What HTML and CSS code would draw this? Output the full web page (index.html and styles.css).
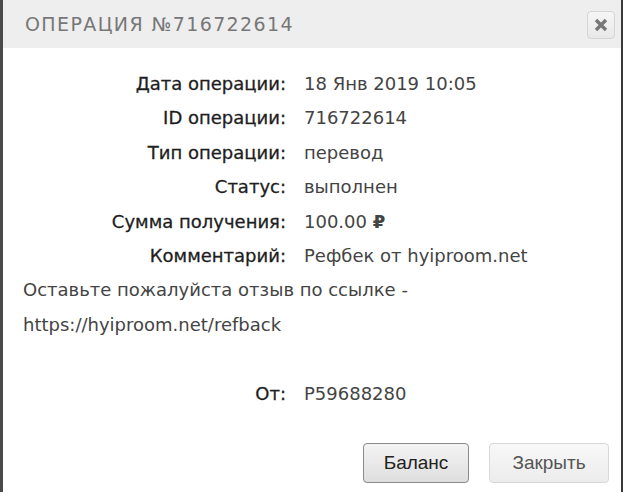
FILE: index.html
```html
<!DOCTYPE html>
<html>
<head>
<meta charset="utf-8">
<link rel="stylesheet" href="styles.css">
</head>
<body>
<div class="dialog">
  <div class="header">
    <div class="title">ОПЕРАЦИЯ №716722614</div>
    <button class="close" aria-label="close">
      <svg width="14" height="14" viewBox="0 0 14 14"><path d="M2 2 L12 12 M12 2 L2 12" stroke="#777" stroke-width="3.4" stroke-linecap="butt"/></svg>
    </button>
  </div>
  <div class="body">
    <div class="rows">
      <div class="label">Дата операции:</div><div class="value">18 Янв 2019 10:05</div>
      <div class="label">ID операции:</div><div class="value">716722614</div>
      <div class="label">Тип операции:</div><div class="value">перевод</div>
      <div class="label">Статус:</div><div class="value">выполнен</div>
      <div class="label">Сумма получения:</div><div class="value">100.00 <b class="rub">₽</b></div>
      <div class="label">Комментарий:</div><div class="value">Рефбек от hyiproom.net</div>
    </div>
    <div class="comment">Оставьте пожалуйста отзыв по ссылке -<br>https://hyiproom.net/refback</div>
    <div class="rows from">
      <div class="label">От:</div><div class="value">P59688280</div>
    </div>
  </div>
  <div class="footer">
    <button class="btn primary">Баланс</button>
    <button class="btn secondary">Закрыть</button>
  </div>
</div>
</body>
</html>
```
FILE: styles.css
```css
html, body {
  margin: 0;
  padding: 0;
  background: #fff;
}
.dialog {
  width: 618px;
  height: 492px;
  border-left: 3px solid #4a4a4a;
  border-right: 2px solid #3a3a3a;
  background: #fff;
  display: flex;
  flex-direction: column;
  font-family: "DejaVu Sans", sans-serif;
  color: #333;
}
.header {
  height: 48px;
  background: #eeeeee;
  display: flex;
  align-items: center;
  justify-content: space-between;
  padding: 0 6px 0 22px;
}
.title {
  font-family: "DejaVu Sans", sans-serif;
  font-size: 19px;
  letter-spacing: 1.4px;
  color: #777;
}
.close {
  width: 28px;
  height: 28px;
  border: 1px solid #d4d4d4;
  border-radius: 4px;
  background: linear-gradient(#f6f6f6, #e8e8e8);
  display: flex;
  align-items: center;
  justify-content: center;
  padding: 0;
  margin-top: 1px;
}
.body {
  flex: 1;
  padding: 19px 0 0 20px;
  font-size: 18px;
}
.rows {
  display: grid;
  grid-template-columns: 263px auto;
  column-gap: 18px;
  row-gap: 0;
}
.label, .value {
  height: 34.4px;
  line-height: 34.4px;
}
.label {
  text-align: right;
  color: #1e1e1e;
  -webkit-text-stroke: 0.3px #1e1e1e;
}
.value {
  color: #444;
}
.rub {
  font-weight: bold;
}
.comment {
  line-height: 34.4px;
  color: #444;
}
.from {
  margin-top: 35px;
}
.footer {
  display: flex;
  justify-content: flex-end;
  gap: 20px;
  padding: 0 12px 9px 0;
}
.btn {
  height: 40px;
  padding: 0;
  font-family: "Liberation Sans", Arial, sans-serif;
  font-size: 19px;
  color: #555;
  border: 1px solid #d8d8d8;
  border-radius: 4px;
  background: linear-gradient(#f8f8f8, #ececec);
}
.btn.primary {
  border-color: #8a8a8a;
  color: #222;
  width: 106px;
  background: linear-gradient(#f4f4f4, #dedede);
}
.btn.secondary {
  width: 120px;
}
```
